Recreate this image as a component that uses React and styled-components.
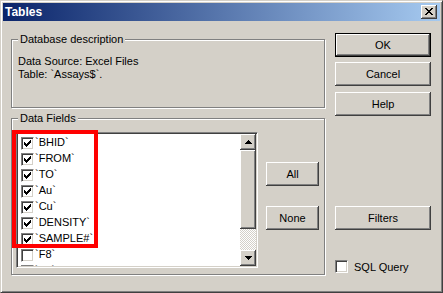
import React from 'react';
import styled, { createGlobalStyle } from 'styled-components';

const FACE = '#d4d0c8';

const GlobalStyle = createGlobalStyle`
  html, body {
    margin: 0;
    padding: 0;
    background: ${FACE};
  }
  body {
    font-family: "Liberation Sans", Arial, sans-serif;
    font-size: 11px;
    color: #000;
  }
  * {
    box-sizing: border-box;
  }
`;

// tiny pixel glyphs, the way the classic theme draws them
const CHECK = [
  '......#',
  '.....##',
  '#...###',
  '##.###.',
  '#####..',
  '.###...',
  '..#....',
];

const CLOSE = [
  '##....##',
  '.##..##.',
  '..####..',
  '...##...',
  '..####..',
  '.##..##.',
  '##....##',
];

const ARROW_UP = ['...#...', '..###..', '.#####.', '#######'];
const ARROW_DOWN = ['#######', '.#####.', '..###..', '...#...'];

const Glyph = styled.svg`
  display: block;
  flex: none;
`;

function Pixels({ rows }) {
  const w = rows[0].length;
  const h = rows.length;
  const rects = [];
  rows.forEach((row, y) => {
    [...row].forEach((c, x) => {
      if (c === '#') rects.push(<rect key={x + '-' + y} x={x} y={y} width="1" height="1" />);
    });
  });
  return (
    <Glyph width={w} height={h} viewBox={`0 0 ${w} ${h}`} fill="#000" shapeRendering="crispEdges">
      {rects}
    </Glyph>
  );
}

const fields = ['BHID', 'FROM', 'TO', 'Au', 'Cu', 'DENSITY', 'SAMPLE#', 'F8', 'F9'];
const checked = 7;

export default function App() {
  return (
    <>
      <GlobalStyle />
      <Window>
        <TitleBar>
          <Title>Tables</Title>
          <CloseButton>
            <Pixels rows={CLOSE} />
          </CloseButton>
        </TitleBar>
        <Body>
          <LeftColumn>
            <GroupBox $height={69}>
              <Legend>Database description</Legend>
              <Info>
                <div>Data Source: Excel Files</div>
                <div>Table: `Assays$`.</div>
              </Info>
            </GroupBox>
            <GroupBox $height={157}>
              <Legend>Data Fields</Legend>
              <FieldsRow>
                <ListBox>
                  <Items>
                    {fields.map((f, i) => (
                      <Item key={f}>
                        <CheckBox>{i < checked && <Pixels rows={CHECK} />}</CheckBox>
                        <ItemLabel>`{f}`</ItemLabel>
                      </Item>
                    ))}
                  </Items>
                  <ScrollBar>
                    <ScrollButton>
                      <Pixels rows={ARROW_UP} />
                    </ScrollButton>
                    <Thumb />
                    <Track />
                    <ScrollButton>
                      <Pixels rows={ARROW_DOWN} />
                    </ScrollButton>
                  </ScrollBar>
                  <Highlight />
                </ListBox>
                <SideButtons>
                  <Button $width={53}>All</Button>
                  <Button $width={53}>None</Button>
                </SideButtons>
              </FieldsRow>
            </GroupBox>
          </LeftColumn>
          <RightColumn>
            <Button $default>OK</Button>
            <Button $top={5}>Cancel</Button>
            <Button $top={6}>Help</Button>
            <Button $top={90}>Filters</Button>
            <CheckRow>
              <CheckBox />
              <span>SQL Query</span>
            </CheckRow>
          </RightColumn>
        </Body>
      </Window>
    </>
  );
}

const raised = `
  background: ${FACE};
  box-shadow: inset -1px -1px #404040, inset 1px 1px #fff, inset -2px -2px #808080, inset 2px 2px ${FACE};
`;

const Window = styled.div`
  width: 443px;
  height: 293px;
  background: ${FACE};
  border: 1px solid;
  border-color: ${FACE} #404040 #404040 ${FACE};
  box-shadow: inset 1px 1px #fff, inset -1px -1px #808080;
  padding: 2px;
  display: flex;
  flex-direction: column;
`;

const TitleBar = styled.div`
  height: 18px;
  flex: none;
  display: flex;
  align-items: center;
  padding: 0 3px 0 2px;
  background: linear-gradient(to right, #0a246a, #a6caf0);
`;

const Title = styled.span`
  color: #fff;
  font-weight: bold;
  font-size: 12px;
`;

const CloseButton = styled.div`
  ${raised}
  margin-left: auto;
  width: 16px;
  height: 14px;
  padding: 3px 0 0 4px;
`;

const Body = styled.div`
  flex: 1;
  display: flex;
  gap: 10px;
  padding: 12px 9px 0 8px;
`;

const LeftColumn = styled.div`
  width: 314px;
  display: flex;
  flex-direction: column;
  gap: 10px;
  padding-top: 6px;
`;

const GroupBox = styled.div`
  position: relative;
  height: ${p => p.$height}px;
  border: 1px solid #808080;
  box-shadow: inset 1px 1px #fff, 1px 1px #fff;
`;

const Legend = styled.span`
  position: absolute;
  top: -7px;
  left: 6px;
  padding: 0 2px;
  line-height: 13px;
  background: ${FACE};
`;

const Info = styled.div`
  padding: 15px 6px;
  line-height: 13px;
`;

const FieldsRow = styled.div`
  display: flex;
  gap: 8px;
  padding: 13px 0 0 4px;
`;

const ListBox = styled.div`
  position: relative;
  width: 242px;
  height: 136px;
  display: flex;
  background: #fff;
  border: 1px solid;
  border-color: #808080 #fff #fff #808080;
  box-shadow: inset 1px 1px #404040, inset -1px -1px ${FACE};
  padding: 1px;
`;

const Items = styled.div`
  flex: 1;
  overflow: hidden;
`;

const Item = styled.div`
  height: 16px;
  display: flex;
  align-items: flex-start;
  padding-left: 3px;
`;

const ItemLabel = styled.span`
  line-height: 16px;
  margin-left: 1px;
`;

const CheckBox = styled.div`
  flex: none;
  width: 13px;
  height: 13px;
  margin-top: 3px;
  padding: 2px;
  background: #fff;
  border: 1px solid;
  border-color: #808080 #fff #fff #808080;
  box-shadow: inset 1px 1px #404040, inset -1px -1px ${FACE};
`;

const ScrollBar = styled.div`
  width: 16px;
  display: flex;
  flex-direction: column;
`;

const ScrollButton = styled.div`
  ${raised}
  height: 16px;
  display: flex;
  align-items: center;
  justify-content: center;
`;

const Thumb = styled.div`
  ${raised}
  height: 79px;
`;

const Track = styled.div`
  flex: 1;
  background: repeating-conic-gradient(${FACE} 0 25%, #fff 0 50%) 0 0 / 2px 2px;
`;

const Highlight = styled.div`
  position: absolute;
  left: -5px;
  top: -3px;
  width: 86px;
  height: 118px;
  border: 4px solid #ff0000;
  pointer-events: none;
`;

const SideButtons = styled.div`
  display: flex;
  flex-direction: column;
  gap: 20px;
  padding-top: 30px;
`;

const Button = styled.div`
  ${raised}
  width: ${p => (p.$width ? p.$width + 'px' : '100%')};
  height: 24px;
  margin-top: ${p => p.$top || 0}px;
  display: flex;
  align-items: center;
  justify-content: center;
  ${p =>
    p.$default &&
    `
    border: 1px solid #000;
    box-shadow: inset -1px -1px #404040, inset 1px 1px #fff, inset -2px -2px #808080, inset 2px 2px ${FACE};
  `}
`;

const RightColumn = styled.div`
  width: 96px;
  display: flex;
  flex-direction: column;
`;

const CheckRow = styled.div`
  display: flex;
  align-items: center;
  gap: 6px;
  margin-top: 30px;

  ${CheckBox} {
    margin-top: 0;
  }
`;
